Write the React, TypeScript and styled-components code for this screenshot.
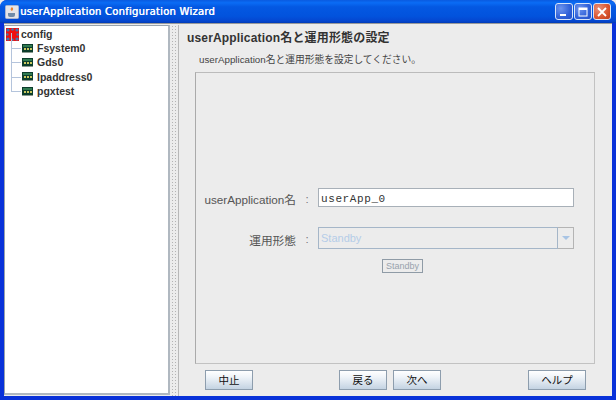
import React from "react";
import styled, { createGlobalStyle } from "styled-components";

const Global = createGlobalStyle`
  html, body { margin: 0; padding: 0; background: #ececec; overflow: hidden; }
  #root { width: 616px; height: 400px; }
`;

const Win = styled.div`
  width: 616px; height: 400px; box-sizing: border-box; display: flex; flex-direction: column;
  background: #0831d9; border-radius: 7px 7px 0 0; overflow: hidden;
  font-family: "Liberation Sans", "Noto Sans CJK JP", sans-serif;
`;
const TitleBar = styled.div`
  height: 23px; flex: none; display: flex; align-items: center; padding: 0 5px 0 5px; gap: 1px;
  background: linear-gradient(180deg, #0a5ae0 0%, #0a6cf5 12%, #0458e2 30%, #0253dd 70%, #0546cf 92%, #023bb4 100%);
`;
const TitleIcon = styled.svg` width: 14px; height: 14px; flex: none; `;
const TitleText = styled.div`
  flex: 1; color: #fff; font-size: 10px; letter-spacing: 0.25px; white-space: nowrap;
  font-family: "DejaVu Sans", "Liberation Sans", sans-serif;
  text-shadow: 0.4px 0 0 #fff;
`;
const WinBtn = styled.div<{ $close?: boolean }>`
  width: 18px; height: 17px; box-sizing: border-box; border-radius: 3px; border: 1px solid #d8e4f8;
  display: flex; align-items: center; justify-content: center;
  background: ${p => p.$close
    ? "radial-gradient(circle at 30% 30%, #e8907a, #d9552f 60%, #c03a18)"
    : "radial-gradient(circle at 30% 30%, #6d94ee, #2f60d8 60%, #2450c8)"};
`;
const WinBtns = styled.div` display: flex; gap: 1px; flex: none; `;
const Body = styled.div`
  flex: 1; min-height: 0; margin: 0 4px 4px 4px; display: flex; background: #ececec;
  border-top: 1px solid #9a9a9a;
`;
const TreePanel = styled.div`
  width: 166px; flex: none; margin: 1px 0 1px 0; box-sizing: border-box; background: #fff;
  border-style: solid; border-width: 1px 2px 2px 1px; padding: 1px 0 0 1px;
  border-color: #98a2ac #b0b8c0 #b0b8c0 #98a2ac;
`;
const TreeRoot = styled.div`
  display: flex; align-items: center; gap: 2px; height: 14px; font-size: 10.5px; font-weight: bold; color: #333;
`;
const TreeRow = styled.div`
  position: relative; display: flex; align-items: center; height: 14.3px; margin-left: 5px; padding-left: 11px; gap: 4px;
  font-size: 10.5px; font-weight: bold; color: #333;
  &::before { content: ""; position: absolute; left: 0; top: -8px; bottom: 7px; border-left: 1px solid #b4c4dc; }
  &::after { content: ""; position: absolute; left: 0; top: 7px; width: 10px; border-top: 1px solid #b4c4dc; }
`;
const Splitter = styled.div`
  width: 8px; flex: none; margin: 1px 0 0 0;
  background-color: #ececec;
  background-image: radial-gradient(circle, #b3b3b3 0.7px, transparent 0.8px);
  background-size: 3px 3px; background-position: 1px 0;
  border-right: 1px solid #b8b8b8;
`;
const Content = styled.div`
  flex: 1; min-width: 0; display: flex; flex-direction: column; padding: 6px 0 0 8px; color: #333;
`;
const Heading = styled.div`
  font-size: 12px; font-weight: bold; color: #333; height: 16px; line-height: 16px; letter-spacing: 0.17px; white-space: nowrap;
`;
const SubHeading = styled.div`
  font-size: 9.75px; color: #444; margin: 7px 0 0 12px; height: 14px; line-height: 14px; white-space: nowrap;
`;
const FormBox = styled.div`
  width: 400px; height: 292px; box-sizing: border-box; margin: 5px 0 0 8px; flex: none;
  border: 1px solid #c2c2c2; border-top-color: #bbb; border-left-color: #aaa;
  display: flex; flex-direction: column; padding-top: 115px;
`;
const FormRow = styled.div` display: flex; align-items: center; height: 19px; `;
const ComboRow = styled(FormRow)` height: 22px; margin-top: 20px; `;
const Label = styled.div`
  width: 100px; flex: none; text-align: right; font-size: 11.7px; padding-top: 2px; color: #555; white-space: nowrap;
`;
const Colon = styled.div` width: 22px; flex: none; text-align: center; font-size: 11.5px; padding-top: 2px; color: #777; `;
const TextField = styled.div`
  width: 256px; height: 19px; box-sizing: border-box; background: #fff; border: 1px solid #a8b0b8;
  font-family: "Liberation Mono", monospace; font-size: 11px; letter-spacing: 0.6px; line-height: 20px; padding-left: 2px; color: #333;
`;
const Combo = styled.div` width: 256px; height: 22px; display: flex; box-sizing: border-box; `;
const ComboValue = styled.div`
  flex: 1; box-sizing: border-box; border: 1px solid #a5b6c8; background: #ececec; color: #b5cce8;
  font-size: 11px; line-height: 20px; padding-left: 2px;
`;
const ComboArrow = styled.div`
  width: 16px; box-sizing: border-box; border: 1px solid #b4b4b4; border-left: none; display: flex; align-items: center; justify-content: center;
  &::after { content: ""; border: 4px solid transparent; border-top: 4px solid #a8c4e4; border-bottom: none; }
`;
const DisabledTag = styled.div`
  align-self: flex-start; margin: 10px 0 0 186px; width: 41px; height: 14px; box-sizing: border-box;
  border: 1px solid #8f9ba6; background: #ececec; text-align: center;
  font-size: 9px; line-height: 12px; color: #98a2ac;
`;
const Footer = styled.div`
  display: flex; align-items: flex-start; padding: 6px 0 0 18px;
`;
const Btn = styled.div<{ $w: number; $ml?: number }>`
  width: ${p => p.$w}px; margin-left: ${p => p.$ml ?? 0}px; height: 20px; box-sizing: border-box; flex: none;
  border: 1px solid #8d9dad; text-align: center; font-size: 10.5px; line-height: 18px; color: #111;
  background: linear-gradient(180deg, #fff 0%, #eef3f8 35%, #c4d3e2 100%);
`;

const NodeIcon = () => (
  <svg width="11" height="9" viewBox="0 0 11 9" style={{ flex: "none" }}>
    <rect x="0" y="0" width="11" height="8" fill="#0c3d2c" />
    <rect x="1" y="1" width="9" height="2" fill="#2f7a50" />
    <path d="M2 4h2v2H2zM5 4h2v2H5zM8 4h2v2H8z" fill="#c8c860" />
    <rect x="0" y="8" width="11" height="1" fill="#8a9a90" />
  </svg>
);

const items = ["Fsystem0", "Gds0", "Ipaddress0", "pgxtest"];

export default function App() {
  return (
    <Win>
      <Global />
      <TitleBar>
        <TitleIcon viewBox="0 0 14 14">
          <rect x="0.5" y="0.5" width="13" height="13" rx="1" fill="#e4e4e8" stroke="#a8b4d0" />
          <path d="M7 2c2 2 1 3 0 4-1-1-2-1-1-3z" fill="#e88030" />
          <path d="M3 8h7v2a2 2 0 0 1-2 2H5a2 2 0 0 1-2-2z" fill="#6f8aa8" />
        </TitleIcon>
        <TitleText>userApplication Configuration Wizard</TitleText>
        <WinBtns>
          <WinBtn>
            <svg width="12" height="12" viewBox="0 0 12 12"><rect x="2" y="8" width="6" height="2" fill="#fff" /></svg>
          </WinBtn>
          <WinBtn>
            <svg width="12" height="12" viewBox="0 0 12 12"><rect x="2" y="2" width="8" height="8" fill="none" stroke="#fff" /><rect x="2" y="2" width="8" height="2" fill="#fff" /></svg>
          </WinBtn>
          <WinBtn $close>
            <svg width="12" height="12" viewBox="0 0 12 12"><path d="M2 2l8 8M10 2l-8 8" stroke="#fff" strokeWidth="1.8" /></svg>
          </WinBtn>
        </WinBtns>
      </TitleBar>
      <Body>
        <TreePanel>
          <TreeRoot>
            <svg width="13" height="13" viewBox="0 0 13 13" style={{ flex: "none" }}>
              <rect x="0" y="0" width="13" height="13" fill="#f01010" />
              <g fill="#3f78b0">
                <circle cx="2" cy="2" r="1.6" />
                <circle cx="6.5" cy="1.4" r="1.2" />
                <circle cx="11" cy="2" r="1.6" />
                <circle cx="1.4" cy="6.5" r="1.2" />
                <circle cx="11.6" cy="6.5" r="1.2" />
                <circle cx="2" cy="11" r="1.6" />
                <circle cx="6.5" cy="11.6" r="1.2" />
                <circle cx="11" cy="11" r="1.6" />
              </g>
            </svg>
            config
          </TreeRoot>
          {items.map(i => (
            <TreeRow key={i}><NodeIcon />{i}</TreeRow>
          ))}
        </TreePanel>
        <Splitter />
        <Content>
          <Heading>userApplication名と運用形態の設定</Heading>
          <SubHeading>userApplication名と運用形態を設定してください。</SubHeading>
          <FormBox>
            <FormRow>
              <Label>userApplication名</Label>
              <Colon>:</Colon>
              <TextField>userApp_0</TextField>
            </FormRow>
            <ComboRow>
              <Label>運用形態</Label>
              <Colon>:</Colon>
              <Combo>
                <ComboValue>Standby</ComboValue>
                <ComboArrow />
              </Combo>
            </ComboRow>
            <DisabledTag>Standby</DisabledTag>
          </FormBox>
          <Footer>
            <Btn $w={48}>中止</Btn>
            <Btn $w={48} $ml={86}>戻る</Btn>
            <Btn $w={48} $ml={6}>次へ</Btn>
            <Btn $w={58} $ml={87}>ヘルプ</Btn>
          </Footer>
        </Content>
      </Body>
    </Win>
  );
}
